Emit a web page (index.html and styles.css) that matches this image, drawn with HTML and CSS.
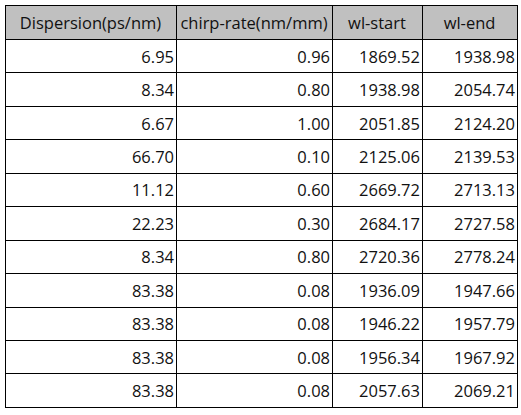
FILE: index.html
```html
<!DOCTYPE html>
<html>
<head>
<meta charset="utf-8">
<link rel="stylesheet" href="styles.css">
</head>
<body>
<table class="grid">
  <colgroup>
    <col class="c1"><col class="c2"><col class="c3"><col class="c4">
  </colgroup>
  <thead>
    <tr class="head">
      <th>Dispersion(ps/nm)</th>
      <th>chirp-rate(nm/mm)</th>
      <th>wl-start</th>
      <th>wl-end</th>
    </tr>
  </thead>
  <tbody>
    <tr><td>6.95</td><td>0.96</td><td>1869.52</td><td>1938.98</td></tr>
    <tr><td>8.34</td><td>0.80</td><td>1938.98</td><td>2054.74</td></tr>
    <tr><td>6.67</td><td>1.00</td><td>2051.85</td><td>2124.20</td></tr>
    <tr><td>66.70</td><td>0.10</td><td>2125.06</td><td>2139.53</td></tr>
    <tr><td>11.12</td><td>0.60</td><td>2669.72</td><td>2713.13</td></tr>
    <tr><td>22.23</td><td>0.30</td><td>2684.17</td><td>2727.58</td></tr>
    <tr><td>8.34</td><td>0.80</td><td>2720.36</td><td>2778.24</td></tr>
    <tr><td>83.38</td><td>0.08</td><td>1936.09</td><td>1947.66</td></tr>
    <tr><td>83.38</td><td>0.08</td><td>1946.22</td><td>1957.79</td></tr>
    <tr><td>83.38</td><td>0.08</td><td>1956.34</td><td>1967.92</td></tr>
    <tr><td>83.38</td><td>0.08</td><td>2057.63</td><td>2069.21</td></tr>
  </tbody>
</table>
</body>
</html>
```
FILE: styles.css
```css
html, body {
  margin: 0;
  padding: 0;
  background: #ffffff;
}
body {
  padding: 5px 0 0 5px;
  font-family: "Open Sans", "Liberation Sans", sans-serif;
  color: #111111;
}
.grid {
  border-collapse: collapse;
  table-layout: fixed;
  width: 512px;
}
.c1 { width: 171px; }
.c2 { width: 156px; }
.c3 { width: 90px; }
.c4 { width: 95px; }
.grid th, .grid td {
  border: 1px solid #000;
  padding: 0 2px 0 1px;
  font-size: 16.5px;
  font-weight: normal;
  white-space: nowrap;
  overflow: hidden;
}
.grid th {
  background: #c0c0c0;
  text-align: center;
  height: 33px;
}
.grid td {
  text-align: right;
  height: 32.45px;
}
```
